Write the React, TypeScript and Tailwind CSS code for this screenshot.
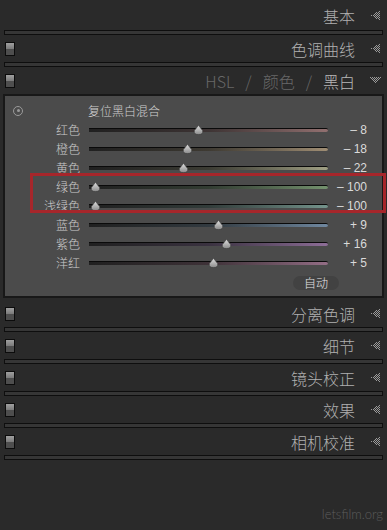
import React from "react";

const sliders = [
  { label: "红色", value: "– 8", v: -8, track: "from-[#202020] via-[#3e3434] to-[#927070]" },
  { label: "橙色", value: "– 18", v: -18, track: "from-[#202020] via-[#3e3a32] to-[#a08e74]" },
  { label: "黄色", value: "– 22", v: -22, track: "from-[#202020] via-[#3c3c34] to-[#a0a084]" },
  { label: "绿色", value: "– 100", v: -100, track: "from-[#202020] via-[#323c32] to-[#74926e]" },
  { label: "浅绿色", value: "– 100", v: -100, track: "from-[#202020] via-[#323c3a] to-[#74948c]" },
  { label: "蓝色", value: "+ 9", v: 9, track: "from-[#202020] via-[#323a40] to-[#7088a0]" },
  { label: "紫色", value: "+ 16", v: 16, track: "from-[#202020] via-[#3a3240] to-[#8e6e98]" },
  { label: "洋红", value: "+ 5", v: 5, track: "from-[#202020] via-[#3e3238] to-[#946e86]" },
];

function Dots({ down }: { down?: boolean }) {
  const cells: JSX.Element[] = [];
  if (down) {
    // triangle pointing down, 11 wide x 7 tall
    for (let y = 0; y < 7; y++) {
      for (let x = y; x <= 10 - y; x++) {
        if ((x + y) % 2 === 0) cells.push(<rect key={`${x}-${y}`} x={x} y={y} width="1" height="1" />);
      }
    }
    return (
      <svg width="11" height="7" viewBox="0 0 11 7" fill="#9a9a9a">
        {cells}
      </svg>
    );
  }
  // triangle pointing left, 9 wide x 11 tall
  for (let x = 0; x < 9; x++) {
    const half = Math.floor((x * 5) / 8);
    for (let y = 5 - half; y <= 5 + half; y++) {
      if ((x + y) % 2 === 1) cells.push(<rect key={`${x}-${y}`} x={x} y={y} width="1" height="1" />);
    }
  }
  return (
    <svg width="9" height="11" viewBox="0 0 9 11" fill="#9a9a9a">
      {cells}
    </svg>
  );
}

function Switch() {
  return (
    <div className="flex h-[14px] w-[10px] flex-col border border-[#0c0c0c]">
      <div className="flex-1 bg-linear-to-b from-[#a0a0a0] to-[#7a7a7a]" />
      <div className="flex-1 bg-[#4e4e4e]" />
    </div>
  );
}

function Divider() {
  return <div className="h-[5px] border border-[#0e0e0e] bg-[#363636]" />;
}

function Header({ title, toggle = true, h = "h-[27px]" }: { title: string; toggle?: boolean; h?: string }) {
  return (
    <div className={`flex items-center ${h}`}>
      <div className="w-[12px] pl-[1px]">{toggle && <Switch />}</div>
      <div className="flex-1 pt-[1px] text-right text-[16px] font-light text-[#b0b0b0]">{title}</div>
      <div className="flex w-[28px] justify-end pr-[3px]">
        <Dots />
      </div>
    </div>
  );
}

function Thumb() {
  return (
    <svg width="11" height="10" viewBox="0 0 11 10">
      <defs>
        <linearGradient id="tg" x1="0" y1="0" x2="0" y2="1">
          <stop offset="0" stopColor="#e0e0e0" />
          <stop offset="1" stopColor="#8a8a8a" />
        </linearGradient>
      </defs>
      <path d="M5.5 0.3 L9.6 5.6 Q10.6 9.6 5.5 9.6 Q0.4 9.6 1.4 5.6 Z" fill="url(#tg)" stroke="#3a3a3a" strokeWidth="0.6" />
    </svg>
  );
}

export default function App() {
  return (
    <div className="relative h-[530px] w-[387px] overflow-hidden bg-[#2a2a2a] px-[4px] font-['Noto_Sans_CJK_SC','Liberation_Sans',sans-serif]">
      <Header title="基本" toggle={false} h="h-[30px]" />
      <Divider />
      <Header title="色调曲线" />
      <Divider />
      <div className="flex h-[27px] items-center">
        <div className="w-[12px] pl-[1px]">
          <Switch />
        </div>
        <div className="flex flex-1 items-center justify-end gap-[11px] text-[16px] font-light">
          <span className="text-[#686868]">HSL</span>
          <span className="text-[#686868]">/</span>
          <span className="text-[#686868]">颜色</span>
          <span className="text-[#686868]">/</span>
          <span className="text-[#b8b8b8]">黑白</span>
        </div>
        <div className="flex w-[28px] justify-end pr-[2px]">
          <Dots down />
        </div>
      </div>

      {/* black & white mix panel */}
      <div className="relative -mx-[1px] mb-[2px] border-2 border-[#181818] bg-[#4b4b4b] pt-[5px] pb-[2px]">
        <div className="flex h-[19px] items-center">
          <div className="ml-[8px] flex h-[10px] w-[10px] items-center justify-center rounded-full border border-[#9a9a9a]">
            <div className="h-[3px] w-[3px] rounded-full bg-[#9a9a9a]" />
          </div>
          <span className="ml-[65px] text-[12px] font-light text-[#d0d0d0]">复位黑白混合</span>
        </div>
        {sliders.map((s) => (
          <div key={s.label} className="flex h-[19px] items-center">
            <div className="w-[75px] text-right text-[12px] font-light text-[#cccccc]">{s.label}</div>
            <div className="relative ml-[9px] h-[10px] w-[239px]">
              <div
                className={`absolute top-[3px] right-0 left-0 h-[4px] rounded-r-full border-t border-[#0a0a0a] bg-linear-to-r ${s.track}`}
              />
              <div className="absolute top-0" style={{ left: 6 + ((s.v + 100) / 200) * 226 - 5.5 }}>
                <Thumb />
              </div>
            </div>
            <div className="w-[39px] text-right font-['Liberation_Sans',sans-serif] text-[12px] text-[#dadada]">{s.value}</div>
          </div>
        ))}
        <div className="flex h-[22px] items-center justify-end pr-[43px]">
          <div className="flex h-[14px] w-[46px] items-center justify-center rounded-full bg-[#424242] text-[12px] font-light text-[#e2e2e2]">
            自动
          </div>
        </div>
        <div className="absolute top-[77px] left-[25px] h-[40px] w-[356px] border-[3px] border-[#a6262b]" />
      </div>

      <Header title="分离色调" />
      <Divider />
      <Header title="细节" />
      <Divider />
      <Header title="镜头校正" />
      <Divider />
      <Header title="效果" />
      <Divider />
      <Header title="相机校准" />
      <Divider />
      <div className="mt-[45px] text-right font-['Lato',sans-serif] text-[13px] font-light text-[#5c5c5c]">letsfilm.org</div>
    </div>
  );
}
